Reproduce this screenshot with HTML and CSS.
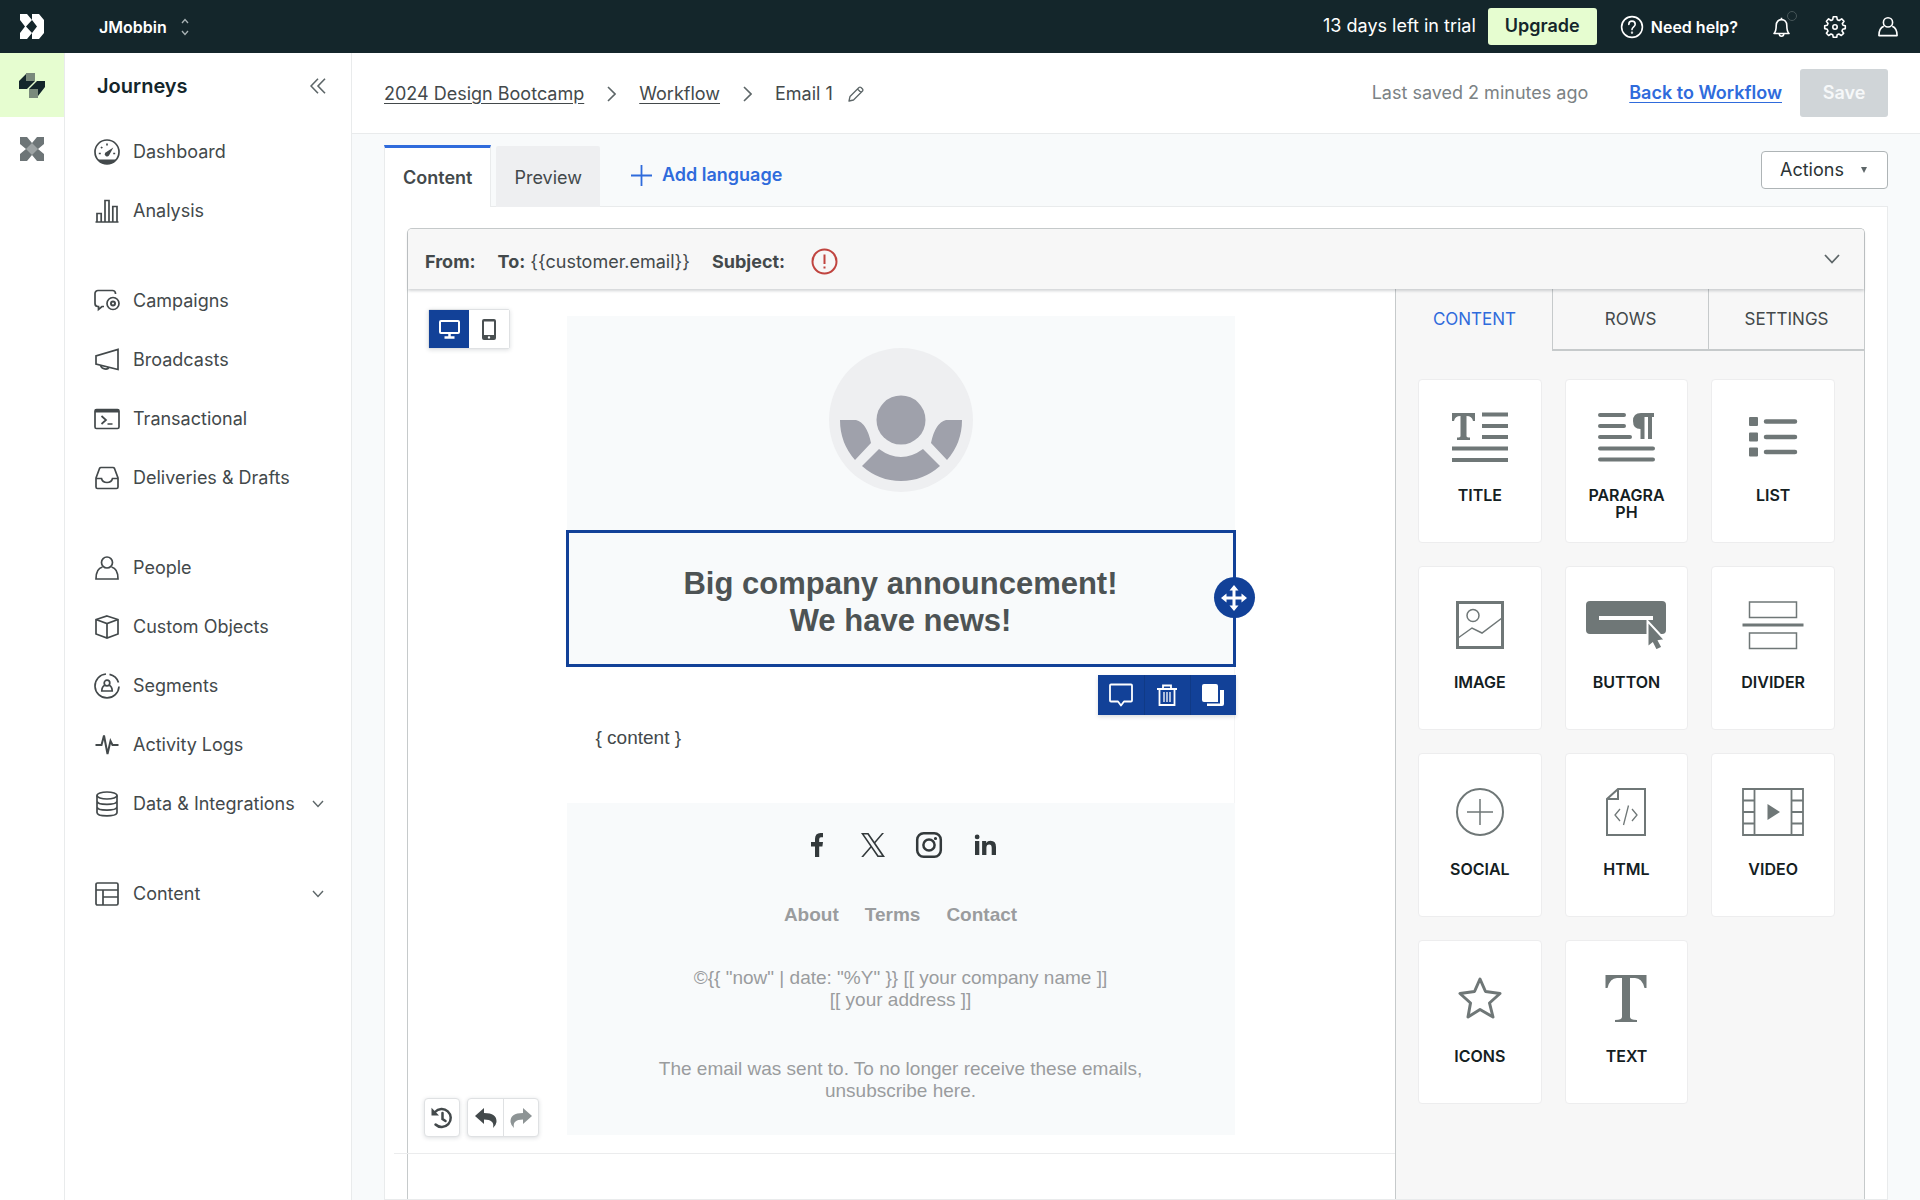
FILE: index.html
```
<!DOCTYPE html>
<html lang="en">
<head>
<meta charset="utf-8">
<meta name="viewport" content="width=device-width, initial-scale=1">
<title>Email 1 – Journeys</title>
<link rel="stylesheet" href="styles.css">
</head>
<body>
<div class="app">
  <header class="topbar">
    <a class="brand" href="#" aria-label="Home">
      <svg width="24" height="25" viewBox="0 0 24 25" fill="#fff"><path d="M0 0H7L12 6L6 12.500L12 19L7 25H0V19L5 12.500L0 6Z"/><path d="M12 0H19L24 6V19L19 25H12V19L17 12.500L12 6Z"/></svg>
    </a>
    <button class="workspace" type="button">JMobbin
      <svg width="8" height="18" viewBox="0 0 8 18" fill="none" stroke="#a9b3b5" stroke-width="1.300"><path d="M1 5L4 1.500L7 5M1 13L4 16.500L7 13"/></svg>
    </button>
    <div class="topbar-right">
      <span class="trial">13 days left in trial</span>
      <button class="upgrade" type="button">Upgrade</button>
      <button class="help" type="button">
        <svg width="24" height="24" viewBox="0 0 24 24" fill="none" stroke="#fff" stroke-width="1.600" stroke-linecap="round"><circle cx="12" cy="12" r="10.400"/><path d="M8.800 9.400C8.800 5 15.200 5.200 15.200 9.200C15.200 11.800 12 11.800 12 14.600"/><circle cx="12" cy="17.600" r=".4"/></svg>
        Need help?
      </button>
      <div class="top-icons">
        <button class="icon-btn bell" type="button" aria-label="Notifications">
          <svg width="24" height="24" viewBox="0 0 24 24" fill="none" stroke="#fff" stroke-width="1.600" stroke-linejoin="round"><path d="M4 18.500C6 16.500 6.200 14 6.200 10.500C6.200 6.800 8.600 4.600 11.500 4.600S16.800 6.800 16.800 10.500C16.800 14 17 16.500 19 18.500Z"/><path d="M9.200 18.700C9.400 22 13.600 22 13.800 18.700M11.500 2.800V4.600"/></svg>
          <span class="bell-dot"></span>
        </button>
        <button class="icon-btn" type="button" aria-label="Settings">
          <svg width="24" height="24" viewBox="0 0 24 24" fill="none" stroke="#fff" stroke-width="1.600" stroke-linejoin="round"><circle cx="12" cy="12" r="2.200"/><path d="M10.300 1.700H13.700L14.300 4.700L16.200 5.500L18.700 3.900L21 6.200L19.300 8.700L20 10.300L22.300 10.700V13.600L19.700 14.200L19 16L20.600 18.300L18.300 20.500L15.900 19L14.200 19.700L13.700 22.300H10.300L9.700 19.700L8 19L5.600 20.500L3.400 18.300L5 16L4.200 14.200L1.700 13.600V10.700L4.300 10.200L5 8.500L3.400 6.200L5.600 3.900L8 5.500L9.700 4.700Z"/></svg>
        </button>
        <button class="icon-btn" type="button" aria-label="Account">
          <svg width="24" height="24" viewBox="0 0 24 24" fill="none" stroke="#fff" stroke-width="1.600"><circle cx="12" cy="7.400" r="4.600"/><path d="M7.800 11.200C4.200 12.500 2.900 16 2.900 20.600H21.100C21.100 16 19.800 12.500 16.200 11.200" stroke-linejoin="round"/></svg>
        </button>
      </div>
    </div>
  </header>

  <div class="shell">
    <nav class="rail" aria-label="Products">
      <a class="rail-item rail-active" href="#" aria-label="Journeys">
        <svg width="28" height="25" viewBox="0 0 28 25"><path fill="#14262b" d="M1 8L8 1V8H17L9 16H1ZM11 16L19 8H27V14L20 23V16Z"/><path fill="#7a8a7c" d="M8 0H17V8H8ZM11 16H20V25H11Z"/></svg>
      </a>
      <a class="rail-item" href="#" aria-label="Data Pipelines">
        <svg width="24" height="24" viewBox="0 0 24 24"><path fill="#6d7577" d="M0 0H7L12 6L17 0H24V7L18 12L24 17V24H17L12 18L7 24H0V17L6 12L0 7Z"/><path fill="#9da3a4" d="M12 6L18 12L12 18L6 12Z"/></svg>
      </a>
    </nav>

    <nav class="sidenav" aria-label="Journeys">
      <div class="sidenav-head">
        <h2>Journeys</h2>
        <button class="icon-btn" type="button" aria-label="Collapse menu">
          <svg width="16" height="16" viewBox="0 0 16 16" fill="none" stroke="#5d6668" stroke-width="1.600"><path d="M8 .7L1 8L8 15.300M15 .7L8 8L15 15.300"/></svg>
        </button>
      </div>
      <ul>
        <li><a href="#"><svg class="ni" viewBox="0 0 26 26"><circle cx="13" cy="13" r="12"/><path class="f" d="M3.500 20.500H22.500C18 26.500 8 26.500 3.500 20.500Z"/><path class="f" d="M19.300 8.500L15 16.500A2.200 2.200 0 0 1 11.200 13.700Z"/><path d="M13 4.500V6.500M7 8L8.300 9.200M4.800 14.500H6.800M19.200 14.500H21.200"/></svg>Dashboard</a></li>
        <li><a href="#"><svg class="ni" viewBox="0 0 26 26"><path d="M1.500 24H24.500M3 24V15.500H7.200V24M11 24V2.500H15V24M18.800 24V8.500H23V24"/></svg>Analysis</a></li>
      </ul>
      <ul>
        <li><a href="#"><svg class="ni" viewBox="0 0 26 26"><path d="M21.500 6V5.500A3 3 0 0 0 18.500 2.500H4A3 3 0 0 0 1 5.500V15.500A3 3 0 0 0 4 18.500H4.500V21.500L8 18.500H10"/><circle cx="19" cy="15.500" r="6"/><circle cx="19" cy="15.500" r="2" stroke-width="2"/></svg>Campaigns</a></li>
        <li><a href="#"><svg class="ni" viewBox="0 0 26 26"><path d="M24 2.500V22.500L2 17V9ZM6.500 18.500C8 22.500 13.500 23 15 20.500"/></svg>Broadcasts</a></li>
        <li><a href="#"><svg class="ni" viewBox="0 0 26 26"><rect x="1" y="3.500" width="24" height="19" rx="1.500"/><path d="M1 5H25" stroke-width="3"/><path d="M7.500 10L12 14L7.500 18M13.500 18H18.500"/></svg>Transactional</a></li>
        <li><a href="#"><svg class="ni" viewBox="0 0 26 26"><path d="M2 13L5.500 3.500Q6 2.500 7 2.500H19Q20 2.500 20.500 3.500L24 13V22Q24 23.500 22.500 23.500H3.500Q2 23.500 2 22ZM2 13.500H7.500Q8.500 17.500 13 17.500T18.500 13.500H24"/></svg>Deliveries &amp; Drafts</a></li>
      </ul>
      <ul>
        <li><a href="#"><svg class="ni" viewBox="0 0 26 26"><circle cx="13" cy="7.500" r="5.500"/><path d="M8.500 12C4 13 2 17 2 24H24C24 17 22 13 17.500 12"/></svg>People</a></li>
        <li><a href="#"><svg class="ni" viewBox="0 0 26 26"><path d="M13 2L24 5.500V20L13 24L2 20V5.500ZM2 5.500L13 9.500L24 5.500M13 9.500V24"/></svg>Custom Objects</a></li>
        <li><a href="#"><svg class="ni" viewBox="0 0 26 26"><path d="M12 1A12 12 0 1 0 25 13.500M15.500 1.300A12 12 0 0 1 24.500 9.500"/><circle cx="13" cy="10" r="2.800"/><path d="M10.800 12.200Q7.800 13.500 7.800 18H18.200Q18.200 13.500 15.200 12.200"/></svg>Segments</a></li>
        <li><a href="#"><svg class="ni" viewBox="0 0 26 26"><path d="M1.500 13H7.500L10 3.500L13.500 22L16.500 9L18.500 13H24.500" stroke-width="2"/></svg>Activity Logs</a></li>
        <li><a href="#"><svg class="ni" viewBox="0 0 26 26"><ellipse cx="13" cy="4.500" rx="10" ry="3.500"/><path d="M3 4.500V21.500C3 26 23 26 23 21.500V4.500M3 10C3 14.500 23 14.500 23 10M3 15.700C3 20.200 23 20.200 23 15.700"/></svg>Data &amp; Integrations<svg class="chev" viewBox="0 0 12 8"><path d="M1 1L6 6.500L11 1"/></svg></a></li>
      </ul>
      <ul>
        <li><a href="#"><svg class="ni" viewBox="0 0 26 26"><rect x="2" y="2" width="22" height="22" rx="1.500"/><path d="M2 9H24M9 9V24M9 16H24"/></svg>Content<svg class="chev" viewBox="0 0 12 8"><path d="M1 1L6 6.500L11 1"/></svg></a></li>
      </ul>
    </nav>

    <main class="main">
      <div class="pagebar">
        <div class="crumbs">
          <a href="#">2024 Design Bootcamp</a>
          <svg class="crumb-sep" viewBox="0 0 9 16"><path d="M1 1L8 8L1 15"/></svg>
          <a href="#">Workflow</a>
          <svg class="crumb-sep" viewBox="0 0 9 16"><path d="M1 1L8 8L1 15"/></svg>
          <span class="crumb-current">Email 1
            <button class="icon-btn" type="button" aria-label="Rename"><svg width="16" height="16" viewBox="0 0 16 16" fill="none" stroke="#5d6668" stroke-width="1.300" stroke-linejoin="round"><path d="M1 15L2 10.500L11 1.500Q12 .7 13 1.500L14.500 3Q15.300 4 14.500 5L5.500 14ZM9.500 3L13 6.500"/></svg></button>
          </span>
        </div>
        <div class="page-actions">
          <span class="saved">Last saved 2 minutes ago</span>
          <a class="back" href="#">Back to Workflow</a>
          <button class="save" type="button" disabled>Save</button>
        </div>
      </div>

      <div class="workspace-area">
        <div class="tabbar">
          <button class="tab tab-active" type="button">Content</button>
          <button class="tab" type="button">Preview</button>
          <button class="add-lang" type="button"><svg width="21" height="21" viewBox="0 0 21 21" stroke="#2f6bdc" stroke-width="1.800"><path d="M10.500 0V21M0 10.500H21"/></svg>Add language</button>
          <button class="actions" type="button">Actions <svg width="6" height="6" viewBox="0 0 6 6"><path d="M0 0H6L3 6Z" fill="#5d6668"/></svg></button>
        </div>

        <section class="panel">
          <div class="editor">
            <div class="envelope">
              <span><b>From:</b></span>
              <span><b>To:</b> {{customer.email}}</span>
              <span><b>Subject:</b></span>
              <svg class="alert" width="27" height="27" viewBox="0 0 27 27" fill="none" stroke="#c0443f" stroke-width="2"><circle cx="13.500" cy="13.500" r="12"/><path d="M13.500 6.500V16M13.500 18.500V20.500"/></svg>
              <button class="icon-btn expand" type="button" aria-label="Expand details"><svg width="16" height="10" viewBox="0 0 16 10" fill="none" stroke="#5d6668" stroke-width="1.800"><path d="M1 1L8 8.500L15 1"/></svg></button>
            </div>

            <div class="editor-body">
              <div class="stage">
                <div class="canvas">
                  <div class="device-toggle">
                    <button class="device device-on" type="button" aria-label="Desktop"><svg width="21" height="20" viewBox="0 0 21 20" fill="none" stroke="#fff"><rect x="1" y="2" width="19" height="12" rx="1" stroke-width="2"/><path d="M10.500 14V18M5.500 18.500H15.500" stroke-width="2.500"/></svg></button>
                    <button class="device" type="button" aria-label="Mobile"><svg width="14" height="21" viewBox="0 0 14 21"><path fill="#4a5052" fill-rule="evenodd" d="M2 0H12A2 2 0 0 1 14 2V19A2 2 0 0 1 12 21H2A2 2 0 0 1 0 19V2A2 2 0 0 1 2 0ZM2 2.500V16H12V2.500ZM7 17.200A1.200 1.200 0 1 0 7 19.600A1.200 1.200 0 1 0 7 17.200Z"/></svg></button>
                  </div>

                  <article class="email">
                    <div class="email-hero">
                      <svg width="144" height="144" viewBox="0 0 144 144"><circle cx="72" cy="72" r="72" fill="#eeeff1"/><g fill="#9fa1ab"><circle cx="72" cy="72" r="24.500"/><path d="M11 72H27Q38 75 42 95L26 112Q11 95 11 72ZM133 72H117Q106 75 102 95L118 112Q133 95 133 72ZM50 101Q72 117 94 101L111 118Q94 133 72 133T33 118Z"/></g></svg>
                    </div>
                    <div class="email-selected">
                      <h1>Big company announcement!<br>We have news!</h1>
                      <button class="move" type="button" aria-label="Move"><svg width="26" height="26" viewBox="0 0 26 26" fill="#fff"><path d="M13 0L17.500 5.500H14.500V11.500H20.500V8.500L26 13L20.500 17.500V14.500H14.500V20.500H17.500L13 26L8.500 20.500H11.500V14.500H5.500V17.500L0 13L5.500 8.500V11.500H11.500V5.500H8.500Z"/></svg></button>
                      <div class="block-tools">
                        <button type="button" aria-label="Comment"><svg width="24" height="24" viewBox="0 0 24 24" fill="none" stroke="#fff" stroke-width="1.800" stroke-linejoin="round"><path d="M2 1.500H22Q23 1.500 23 2.500V17.500Q23 18.500 22 18.500H15L12 22.500L9 18.500H2Q1 18.500 1 17.500V2.500Q1 1.500 2 1.500Z"/></svg></button>
                        <button type="button" aria-label="Delete"><svg width="22" height="22" viewBox="0 0 22 22" fill="none" stroke="#fff" stroke-width="1.800"><path d="M1 5H21M7 5V1.500H15V5M3.500 5V21H18.500V5"/><path d="M8 8V18M11 8V18M14 8V18" stroke-width="1.300"/></svg></button>
                        <button type="button" aria-label="Duplicate"><svg width="22" height="22" viewBox="0 0 22 22"><path fill="#fff" d="M2 0H14Q16 0 16 2V18H2Q0 18 0 16V2Q0 0 2 0ZM18 6H22V20Q22 22 20 22H5V19.500H18Z"/></svg></button>
                      </div>
                    </div>
                    <div class="email-content">{ content }</div>
                    <footer class="email-footer">
                      <div class="socials">
                        <a href="#" aria-label="Facebook"><svg viewBox="0 0 32 32"><path fill="#33393b" d="M14 28V17.500H10V13H14V10Q14 4 19.500 4H22V8.300H20Q18.200 8.300 18.200 10.200V13H22L21.400 17.500H18.200V28Z"/></svg></a>
                        <a href="#" aria-label="X"><svg viewBox="0 0 32 32"><path fill="#33393b" fill-rule="evenodd" d="M4 4H11.500L17.500 12.800L25 4H27L18.400 14.100L28 28H20.500L14.200 18.800L6.300 28H4.200L13.300 17.400ZM6.900 5.600L21.500 26.400H24.900L10.500 5.600Z"/></svg></a>
                        <a href="#" aria-label="Instagram"><svg viewBox="0 0 32 32" fill="none" stroke="#33393b" stroke-width="2.500"><rect x="4.200" y="4.200" width="23.600" height="23.600" rx="6.500"/><circle cx="16" cy="16" r="5.600"/><circle cx="22.500" cy="9.500" r="1" stroke-width="1.200" fill="#33393b"/></svg></a>
                        <a href="#" aria-label="LinkedIn"><svg viewBox="0 0 32 32"><path fill="#33393b" d="M6 12H10.300V26H6ZM8.150 5.500A2.400 2.400 0 1 1 8.150 10.300A2.400 2.400 0 1 1 8.150 5.500ZM13.100 12H17.200V14Q18.400 11.700 21.600 11.700Q27 11.700 27 18V26H22.700V19Q22.700 15.600 20.200 15.600Q17.400 15.600 17.400 19V26H13.100Z"/></svg></a>
                      </div>
                      <div class="email-links"><a href="#">About</a><a href="#">Terms</a><a href="#">Contact</a></div>
                      <p class="copy">©{{ "now" | date: "%Y" }} [[ your company name ]]<br>[[ your address ]]</p>
                      <p class="unsub">The email was sent to. To no longer receive these emails, unsubscribe here.</p>
                    </footer>
                  </article>

                  <div class="history-tools">
                    <button class="tool tool-solo" type="button" aria-label="Version history"><svg width="22" height="22" viewBox="0 0 22 22" fill="none" stroke="#43494b" stroke-width="2.500"><path d="M4 5A9 9 0 1 1 4.500 17.500" stroke-linecap="round"/><path d="M11.500 6V12L14.500 14" stroke-linecap="round"/><path d="M.5 .8V8.500H8Z" fill="#43494b" stroke="none"/></svg></button>
                    <div class="tool-group">
                      <button class="tool" type="button" aria-label="Undo"><svg width="22" height="20" viewBox="0 0 22 20"><path fill="#43494b" d="M0 8L9 0V5Q22 5 21.500 14Q21 17.500 18 20Q20 11.500 9 11.500V16Z"/></svg></button>
                      <button class="tool" type="button" aria-label="Redo"><svg width="22" height="20" viewBox="0 0 22 20"><path fill="#8d9495" d="M22 8L13 0V5Q0 5 .5 14Q1 17.500 4 20Q2 11.500 13 11.500V16Z"/></svg></button>
                    </div>
                  </div>
                </div>
                <div class="stage-foot"></div>
              </div>

              <aside class="palette">
                <div class="palette-tabs">
                  <button class="ptab ptab-on" type="button">CONTENT</button>
                  <button class="ptab" type="button">ROWS</button>
                  <button class="ptab" type="button">SETTINGS</button>
                </div>
                <div class="blocks">
                  <button class="block" type="button"><svg viewBox="0 0 80 56"><path class="fill" d="M12 4H35V12H33Q32 7 26.500 7V27Q26.500 28.500 30 28.500V31H17V28.500Q20.500 28.500 20.500 27V7Q15 7 14 12H12Z"/><path d="M42 5.500H68M42 17H68M42 28H68M12 39.500H68M12 51H68" stroke-width="4"/></svg>TITLE</button>
                  <button class="block" type="button"><svg viewBox="0 0 80 56"><path d="M14 6H38M14 17H38M14 28H44M14 39.500H67M14 50.500H67" stroke-width="4" stroke-linecap="round"/><path class="fill" d="M68 4V8H66V30H62V8H58.500V30H54.500V20Q47 20 47 12T55 4Z"/></svg>PARAGRAPH</button>
                  <button class="block" type="button"><svg viewBox="0 0 80 56"><path class="fill" d="M17 8H24Q25 8 25 9V16Q25 17 24 17H17Q16 17 16 16V9Q16 8 17 8ZM17 23.500H24Q25 23.500 25 24.500V31.500Q25 32.500 24 32.500H17Q16 32.500 16 31.500V24.500Q16 23.500 17 23.500ZM17 38.500H24Q25 38.500 25 39.500V46.500Q25 47.500 24 47.500H17Q16 47.500 16 46.500V39.500Q16 38.500 17 38.500Z"/><path d="M33 12.500H62M33 28H62M33 43H62" stroke-width="4.500" stroke-linecap="round"/></svg>LIST</button>
                  <button class="block" type="button"><svg viewBox="0 0 80 56"><rect x="17.500" y="6.500" width="45" height="45" stroke-width="3"/><circle cx="33" cy="19.500" r="6" stroke-width="1.500"/><path d="M18 42L32 32L42 37L62 22" stroke-width="1.500"/></svg>IMAGE</button>
                  <button class="block" type="button"><svg viewBox="0 0 80 56"><rect class="fill" x="0" y="5" width="80" height="33" rx="4"/><path d="M13 22H67" stroke="#fff" stroke-width="4"/><path fill="#6f7777" stroke="#fff" stroke-width="2" d="M61.500 25V51.500L66.500 47.500L70 54.500L76.500 51.500L73 45L79 44Z"/></svg>BUTTON</button>
                  <button class="block" type="button"><svg viewBox="0 0 80 56"><path d="M16.500 6H63.500V21.500H16.500ZM16.500 37H63.500V52.500H16.500Z" stroke-width="1.500"/><path d="M9.500 29H70.500" stroke-width="3"/></svg>DIVIDER</button>
                  <button class="block" type="button"><svg viewBox="0 0 80 56"><circle cx="40" cy="29" r="23" stroke-width="2"/><path d="M40 16V42M27 29H53" stroke-width="1.500"/></svg>SOCIAL</button>
                  <button class="block" type="button"><svg viewBox="0 0 80 56"><path d="M32 6H59V52H21V16ZM32 6V16H21" stroke-width="2"/><path d="M34 26L29 32L34 38M46 26L51 32L46 38M42.500 22.500L37.500 42" stroke-width="1.300"/></svg>HTML</button>
                  <button class="block" type="button"><svg viewBox="0 0 80 56"><path d="M10 6H70V52H10ZM21.500 6V52M58.500 6V52M10 17.500H21.500M10 29H21.500M10 40.500H21.500M58.500 17.500H70M58.500 29H70M58.500 40.500H70" stroke-width="1.800"/><path class="fill" d="M34.500 21V37L47 29Z"/></svg>VIDEO</button>
                  <button class="block" type="button"><svg viewBox="0 0 80 56"><path d="M40 9L45.500 21.500L60 23.500L49.500 33L53 47L40 39.500L28 47L30.500 33L20 23.500L34.500 21.500Z" stroke-width="3" stroke-linejoin="round"/></svg>ICONS</button>
                  <button class="block" type="button"><svg viewBox="0 0 80 56"><path class="fill" d="M19.500 5H60.500V18H58.500Q56 8 49 8H44V47Q44 50 51 50V52H29V50Q36 50 36 47V8H31Q24 8 21.500 18H19.500Z"/></svg>TEXT</button>
                </div>
              </aside>
            </div>
          </div>
        </section>
      </div>
    </main>
  </div>
</div>
</body>
</html>
```
FILE: styles.css
```
*,
*::before,
*::after {
  box-sizing: border-box;
}

body {
  margin: 0;
  font: 400 18px/24px Inter, "Liberation Sans", sans-serif;
  color: #43494b;
  background: #f8fafb;
}

a {
  color: inherit;
}

button {
  margin: 0;
  padding: 0;
  border: 0;
  background: none;
  font: inherit;
  color: inherit;
}

h1,
h2,
p,
ul {
  margin: 0;
  padding: 0;
}

svg {
  display: block;
  flex: none;
}

.app {
  display: flex;
  flex-direction: column;
  min-height: 100vh;
}

.icon-btn {
  display: flex;
  align-items: center;
}

/* Top bar */
.topbar {
  display: flex;
  align-items: center;
  height: 53px;
  padding-right: 20px;
  background: #14262b;
  color: #fff;
  font-size: 16px;
}

.brand {
  display: flex;
  justify-content: center;
  width: 64px;
}

.workspace {
  display: flex;
  align-items: center;
  gap: 14px;
  margin-left: 35px;
  font-weight: 600;
}

.topbar-right {
  display: flex;
  align-items: center;
  margin-left: auto;
}

.trial {
  padding-bottom: 2px;
  font-size: 18px;
}

.upgrade {
  width: 109px;
  height: 37px;
  margin-left: 12px;
  padding-bottom: 2px;
  border-radius: 3px;
  background: #e6fdd0;
  color: #14262b;
  font-size: 18px;
  font-weight: 600;
}

.help {
  display: flex;
  align-items: center;
  gap: 7px;
  margin-left: 23px;
  font-weight: 600;
}

.top-icons {
  display: flex;
  gap: 29px;
  margin-left: 32px;
}

.bell {
  position: relative;
}

.bell-dot {
  position: absolute;
  top: -4px;
  right: -3px;
  width: 10px;
  height: 10px;
  border: 1px solid #465558;
  border-radius: 50%;
}

/* Shell */
.shell {
  display: flex;
  flex: 1;
}

.rail {
  width: 65px;
  flex: none;
  border-right: 1px solid #e9ebec;
  background: #fff;
}

.rail-item {
  display: flex;
  align-items: center;
  justify-content: center;
  height: 64px;
}

.rail-active {
  background: #e6fdd0;
}

.sidenav {
  width: 287px;
  flex: none;
  padding: 0 25px 0 29px;
  border-right: 1px solid #e9ebec;
  background: #fff;
}

.sidenav-head {
  display: flex;
  align-items: center;
  justify-content: space-between;
  height: 66px;
  margin-bottom: 3px;
  padding-left: 3px;
}

.sidenav-head h2 {
  font-size: 20px;
  font-weight: 600;
  color: #14262b;
}

.sidenav ul {
  margin-bottom: 31px;
  list-style: none;
}

.sidenav li a {
  display: flex;
  align-items: center;
  height: 59px;
  text-decoration: none;
  white-space: nowrap;
}

.ni {
  width: 26px;
  height: 26px;
  margin-right: 13px;
  fill: none;
  stroke: #43494b;
  stroke-width: 1.7px;
}

.ni .f {
  fill: #43494b;
  stroke: none;
}

.chev {
  width: 12px;
  height: 8px;
  margin: 0 2px 0 auto;
  fill: none;
  stroke: #5d6668;
  stroke-width: 1.4px;
}

/* Page header */
.main {
  display: flex;
  flex: 1;
  flex-direction: column;
  min-width: 0;
}

.pagebar {
  display: flex;
  align-items: center;
  justify-content: space-between;
  height: 81px;
  padding: 0 32px;
  border-bottom: 1px solid #e9ebec;
  background: #fff;
}

.crumbs,
.crumb-current,
.page-actions {
  display: flex;
  align-items: center;
}

.crumbs {
  gap: 23px;
  padding-top: 1px;
}

.crumbs a {
  text-underline-offset: 3px;
}

.crumb-sep {
  width: 9px;
  height: 16px;
  fill: none;
  stroke: #5d6668;
  stroke-width: 1.6px;
}

.crumb-current {
  gap: 15px;
}

.saved {
  color: #7b8284;
}

.back {
  margin: 0 18px 0 41px;
  color: #2f6bdc;
  font-weight: 600;
  text-underline-offset: 3px;
}

.save {
  width: 88px;
  height: 48px;
  border-radius: 3px;
  background: #d0d5d8;
  color: #f6f8f9;
  font-weight: 600;
}

/* Tabs */
.workspace-area {
  display: flex;
  flex: 1;
  flex-direction: column;
  padding: 11px 32px 0;
}

.tabbar {
  position: relative;
  display: flex;
  align-items: center;
  height: 62px;
  margin-bottom: -1px;
}

.tab {
  height: 61px;
  margin-right: 5px;
  padding: 3px 18px 0;
  border-radius: 2px 2px 0 0;
  background: #eeeff1;
}

.tab-active {
  height: 62px;
  padding: 0 18px;
  border: 1px solid #e9ebec;
  border-top: 3px solid #2f6bdc;
  border-bottom: 0;
  border-radius: 0;
  background: #fff;
  font-weight: 600;
}

.add-lang {
  display: flex;
  align-items: center;
  gap: 10px;
  margin-left: 26px;
  padding-bottom: 2px;
  color: #2f6bdc;
  font-weight: 600;
}

.actions {
  display: flex;
  align-items: center;
  justify-content: space-between;
  width: 127px;
  height: 38px;
  margin: 0 0 12px auto;
  padding: 0 20px 0 18px;
  border: 1px solid #aeb4b6;
  border-radius: 4px;
  background: #fff;
  color: #2b3335;
}

.panel {
  display: flex;
  flex: 1;
  padding: 21px 22px 0;
  border: 1px solid #e9ebec;
  background: #fff;
}

.editor {
  display: flex;
  flex: 1;
  flex-direction: column;
  border: 1px solid #c6cacb;
  border-bottom: 0;
  border-radius: 5px 5px 0 0;
}

/* Envelope summary */
.envelope {
  position: relative;
  display: flex;
  align-items: center;
  gap: 22px;
  height: 60px;
  padding: 5px 24px 0 17px;
  border-radius: 4px 4px 0 0;
  background: #f7f7f7;
  box-shadow: 0 2px 3px rgba(40, 50, 60, 0.2);
}

.envelope b {
  font-weight: 700;
}

.alert {
  margin-left: 4px;
}

.expand {
  margin-left: auto;
  padding-bottom: 5px;
}

.editor-body {
  display: flex;
  flex: 1;
}

.stage {
  display: flex;
  flex: 1;
  flex-direction: column;
}

.canvas {
  position: relative;
  flex: 1;
  padding: 27px 2px 17px 0;
}

.stage-foot {
  height: 46px;
  margin-left: -14px;
  border-top: 1px solid #ebeced;
}

.device-toggle {
  position: absolute;
  top: 20px;
  left: 20px;
  display: flex;
  border: 1px solid #dfe1e3;
  border-radius: 2px;
  box-shadow: 0 1px 4px rgba(40, 50, 60, 0.16);
}

.device {
  display: flex;
  align-items: center;
  justify-content: center;
  width: 40px;
  height: 38px;
  background: #fff;
}

.device-on {
  background: #124198;
}

.history-tools {
  position: absolute;
  bottom: 16px;
  left: 16px;
  display: flex;
  gap: 7px;
}

.tool-solo,
.tool-group {
  border: 1px solid #dfe1e3;
  border-radius: 4px;
  background: #fff;
  box-shadow: 0 1px 4px rgba(40, 50, 60, 0.16);
}

.tool-group {
  display: flex;
}

.tool {
  display: flex;
  align-items: center;
  justify-content: center;
  width: 35px;
  height: 37px;
}

.tool-solo {
  width: 36px;
  height: 39px;
}

.tool + .tool {
  border-left: 1px solid #dfe1e3;
}

/* Email preview */
.email {
  width: 668px;
  margin: 0 auto;
  font: 400 19px/22px "Liberation Sans", Arial, sans-serif;
}

.email-hero {
  display: flex;
  justify-content: center;
  height: 214px;
  padding-top: 32px;
  background: #f8fafb;
}

.email-selected {
  position: relative;
  margin: 0 -1px;
  padding: 32px 0 25px;
  border: 3px solid #124198;
  background: #f8fafb;
  text-align: center;
}

.email-selected h1 {
  font-size: 31px;
  font-weight: 700;
  line-height: 37px;
  color: #4d5354;
}

.move {
  position: absolute;
  top: 44px;
  right: -22px;
  display: flex;
  align-items: center;
  justify-content: center;
  width: 41px;
  height: 41px;
  border-radius: 50%;
  background: #124198;
}

.block-tools {
  position: absolute;
  top: calc(100% + 11px);
  right: -3px;
  display: flex;
  background: #124198;
  box-shadow: 0 2px 4px rgba(40, 50, 60, 0.16);
}

.block-tools button {
  display: flex;
  align-items: center;
  justify-content: center;
  width: 46px;
  height: 40px;
}

.block-tools button + button {
  border-left: 1px solid #103a86;
}

.email-content {
  height: 136px;
  padding: 60px 29px 0;
  border-right: 1px solid #f4f5f6;
}

.email-footer {
  padding: 26px 90px 33px;
  background: #f8fafb;
  color: #9a9c9e;
  text-align: center;
}

.socials,
.email-links {
  display: flex;
  justify-content: center;
}

.socials {
  gap: 24px;
}

.socials svg {
  width: 32px;
  height: 32px;
}

.email-links {
  gap: 26px;
  margin: 43px 0 41px;
  font-weight: 700;
}

.email-links a {
  text-decoration: none;
}

.copy {
  margin-bottom: 47px;
}

/* Block palette */
.palette {
  width: 469px;
  flex: none;
  border-left: 1px solid #c6cacb;
  background: #f7f7f7;
}

.palette-tabs {
  display: grid;
  grid-template-columns: repeat(3, 1fr);
  height: 62px;
  font-size: 17px;
}

.ptab {
  border: 1px solid #c6cacb;
  border-width: 0 0 2px 1px;
}

.ptab-on {
  border-color: transparent;
  color: #2f6bdc;
}

.blocks {
  display: grid;
  grid-template-columns: repeat(3, 1fr);
  grid-auto-rows: 164px;
  gap: 23px;
  padding: 28px 29px 28px 22px;
}

.block {
  display: flex;
  flex-direction: column;
  align-items: center;
  gap: 22px;
  padding: 29px 20px 0;
  border: 1px solid #ededee;
  border-radius: 4px;
  background: #fff;
  color: #14201f;
  font-size: 16px;
  font-weight: 600;
  line-height: 17px;
  overflow-wrap: anywhere;
}

.block svg {
  width: 80px;
  height: 56px;
  fill: none;
  stroke: #6f7777;
}

.block .fill {
  fill: #6f7777;
  stroke-width: 0;
}
```
